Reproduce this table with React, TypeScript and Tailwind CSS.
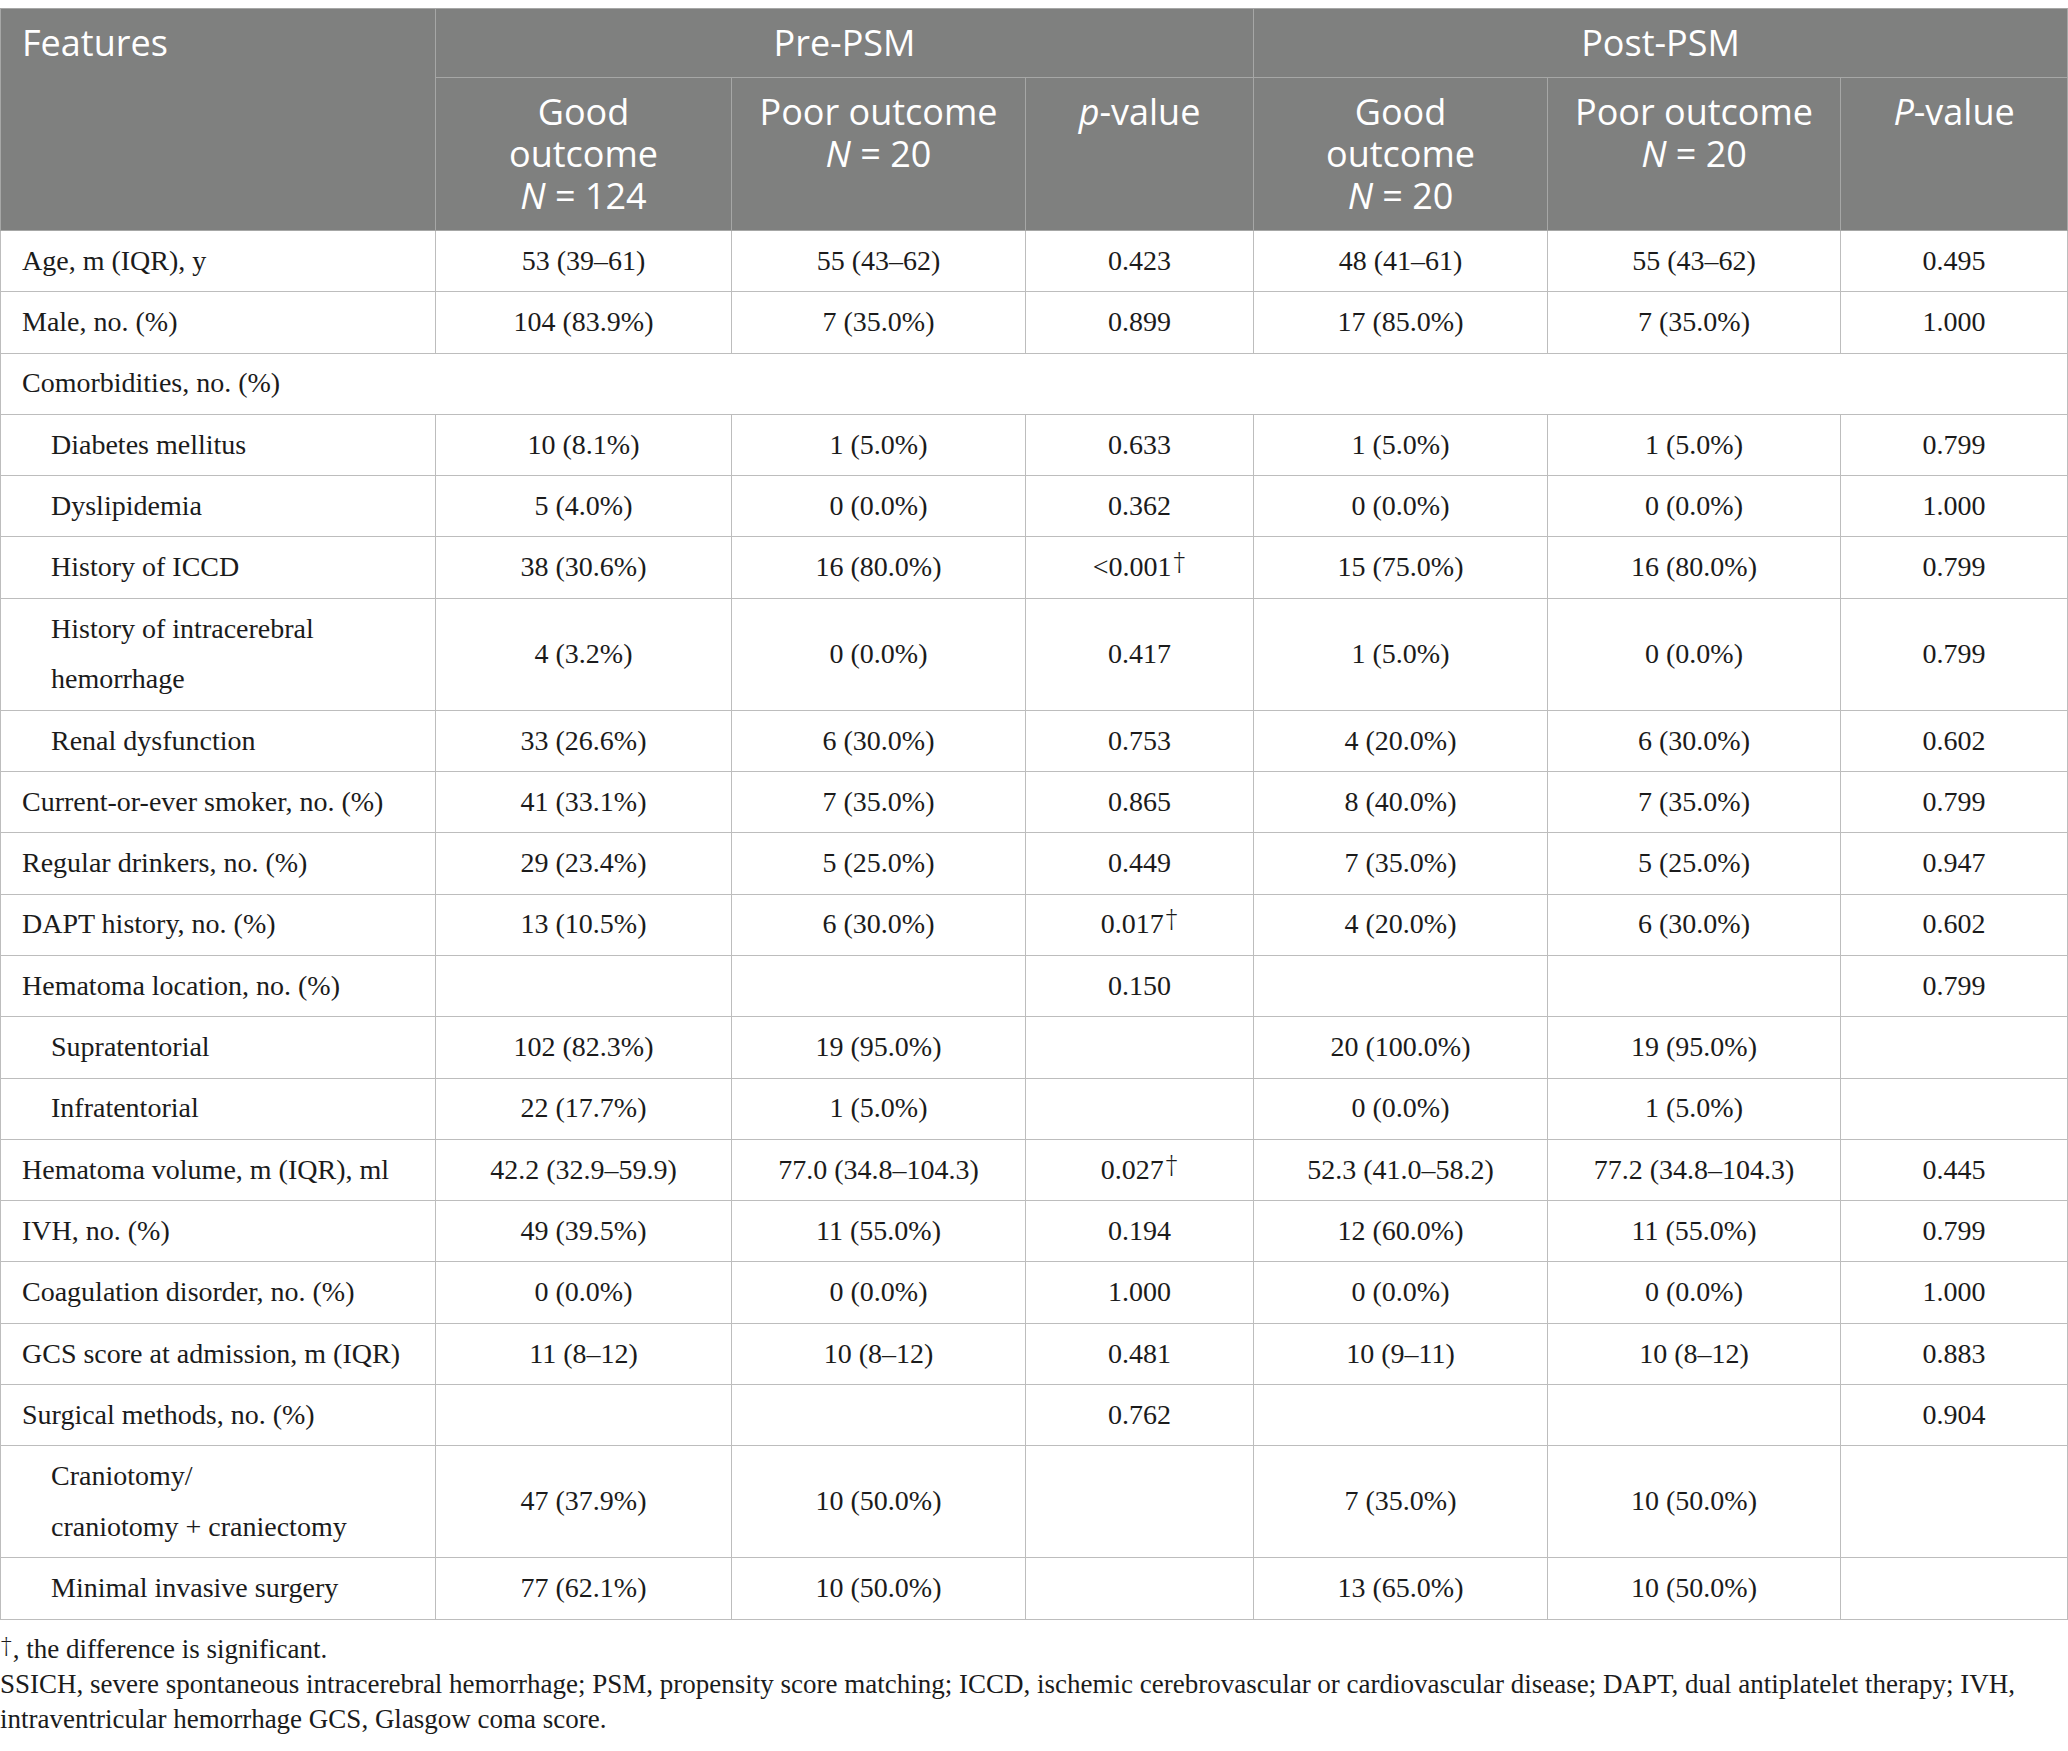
import React from "react";

type Row = {
  label: React.ReactNode;
  sub?: boolean;
  cells: React.ReactNode[];
};

const Dag = () => (
  <sup className="font-['Open_Sans',sans-serif] font-light text-[28px] leading-none relative -top-[3px] ml-[1px]">†</sup>
);

const rows: Row[] = [
  { label: "Age, m (IQR), y", cells: ["53 (39–61)", "55 (43–62)", "0.423", "48 (41–61)", "55 (43–62)", "0.495"] },
  { label: "Male, no. (%)", cells: ["104 (83.9%)", "7 (35.0%)", "0.899", "17 (85.0%)", "7 (35.0%)", "1.000"] },
  { label: "Comorbidities, no. (%)", cells: [] },
  { label: "Diabetes mellitus", sub: true, cells: ["10 (8.1%)", "1 (5.0%)", "0.633", "1 (5.0%)", "1 (5.0%)", "0.799"] },
  { label: "Dyslipidemia", sub: true, cells: ["5 (4.0%)", "0 (0.0%)", "0.362", "0 (0.0%)", "0 (0.0%)", "1.000"] },
  { label: "History of ICCD", sub: true, cells: ["38 (30.6%)", "16 (80.0%)", <>&lt;0.001<Dag /></>, "15 (75.0%)", "16 (80.0%)", "0.799"] },
  {
    label: (
      <>
        History of intracerebral
        <br />
        hemorrhage
      </>
    ),
    sub: true,
    cells: ["4 (3.2%)", "0 (0.0%)", "0.417", "1 (5.0%)", "0 (0.0%)", "0.799"],
  },
  { label: "Renal dysfunction", sub: true, cells: ["33 (26.6%)", "6 (30.0%)", "0.753", "4 (20.0%)", "6 (30.0%)", "0.602"] },
  { label: "Current-or-ever smoker, no. (%)", cells: ["41 (33.1%)", "7 (35.0%)", "0.865", "8 (40.0%)", "7 (35.0%)", "0.799"] },
  { label: "Regular drinkers, no. (%)", cells: ["29 (23.4%)", "5 (25.0%)", "0.449", "7 (35.0%)", "5 (25.0%)", "0.947"] },
  { label: "DAPT history, no. (%)", cells: ["13 (10.5%)", "6 (30.0%)", <>0.017<Dag /></>, "4 (20.0%)", "6 (30.0%)", "0.602"] },
  { label: "Hematoma location, no. (%)", cells: ["", "", "0.150", "", "", "0.799"] },
  { label: "Supratentorial", sub: true, cells: ["102 (82.3%)", "19 (95.0%)", "", "20 (100.0%)", "19 (95.0%)", ""] },
  { label: "Infratentorial", sub: true, cells: ["22 (17.7%)", "1 (5.0%)", "", "0 (0.0%)", "1 (5.0%)", ""] },
  { label: "Hematoma volume, m (IQR), ml", cells: ["42.2 (32.9–59.9)", "77.0 (34.8–104.3)", <>0.027<Dag /></>, "52.3 (41.0–58.2)", "77.2 (34.8–104.3)", "0.445"] },
  { label: "IVH, no. (%)", cells: ["49 (39.5%)", "11 (55.0%)", "0.194", "12 (60.0%)", "11 (55.0%)", "0.799"] },
  { label: "Coagulation disorder, no. (%)", cells: ["0 (0.0%)", "0 (0.0%)", "1.000", "0 (0.0%)", "0 (0.0%)", "1.000"] },
  { label: "GCS score at admission, m (IQR)", cells: ["11 (8–12)", "10 (8–12)", "0.481", "10 (9–11)", "10 (8–12)", "0.883"] },
  { label: "Surgical methods, no. (%)", cells: ["", "", "0.762", "", "", "0.904"] },
  {
    label: (
      <>
        Craniotomy/
        <br />
        craniotomy + craniectomy
      </>
    ),
    sub: true,
    cells: ["47 (37.9%)", "10 (50.0%)", "", "7 (35.0%)", "10 (50.0%)", ""],
  },
  { label: "Minimal invasive surgery", sub: true, cells: ["77 (62.1%)", "10 (50.0%)", "", "13 (65.0%)", "10 (50.0%)", ""] },
];

export default function App() {
  const th = "border border-[#a6a7a6] bg-[#7f807f] py-[13px] align-top font-normal text-white";
  const td = "border border-[#bdbdbd] leading-[50.7px] py-[4.8px] align-middle";

  return (
    <div className="w-[2068px] bg-white pt-2 font-['Liberation_Serif',serif] text-[#1b1b1b]">
      <table className="w-[2067px] table-fixed border-collapse text-[28px]">
        <colgroup>
          <col className="w-[435px]" />
          <col className="w-[296px]" />
          <col className="w-[294px]" />
          <col className="w-[228px]" />
          <col className="w-[294px]" />
          <col className="w-[293px]" />
          <col className="w-[227px]" />
        </colgroup>
        <thead className="font-['Open_Sans',sans-serif] text-[36px] leading-[42px]">
          <tr>
            <th rowSpan={2} className={`${th} px-[21px] text-left`}>
              Features
            </th>
            <th colSpan={3} className={`${th} text-center`}>
              Pre-PSM
            </th>
            <th colSpan={3} className={`${th} text-center`}>
              Post-PSM
            </th>
          </tr>
          <tr>
            <th className={`${th} text-center`}>
              Good
              <br />
              outcome
              <br />
              <i>N</i> = 124
            </th>
            <th className={`${th} text-center`}>
              Poor outcome
              <br />
              <i>N</i> = 20
            </th>
            <th className={`${th} text-center`}>
              <i>p</i>-value
            </th>
            <th className={`${th} text-center`}>
              Good
              <br />
              outcome
              <br />
              <i>N</i> = 20
            </th>
            <th className={`${th} text-center`}>
              Poor outcome
              <br />
              <i>N</i> = 20
            </th>
            <th className={`${th} text-center`}>
              <i>P</i>-value
            </th>
          </tr>
        </thead>
        <tbody>
          {rows.map((r, i) =>
            r.cells.length === 0 ? (
              <tr key={i}>
                <td colSpan={7} className={`${td} px-[21px] text-left`}>
                  {r.label}
                </td>
              </tr>
            ) : (
              <tr key={i}>
                <td className={`${td} ${r.sub ? "pl-[50px]" : "pl-[21px]"} pr-2 text-left`}>{r.label}</td>
                {r.cells.map((c, j) => (
                  <td key={j} className={`${td} text-center`}>
                    {c}
                  </td>
                ))}
              </tr>
            )
          )}
        </tbody>
      </table>
      <div className="mt-[12px] text-[27px] leading-[35px]">
        <p>
          <sup className="font-['Open_Sans',sans-serif] font-light text-[26px] leading-none relative -top-[2px]">†</sup>, the
          difference is significant.
        </p>
        <p>
          SSICH, severe spontaneous intracerebral hemorrhage; PSM, propensity score matching; ICCD, ischemic
          cerebrovascular or cardiovascular disease; DAPT, dual antiplatelet therapy; IVH,
          <br />
          intraventricular hemorrhage GCS, Glasgow coma score.
        </p>
      </div>
    </div>
  );
}
